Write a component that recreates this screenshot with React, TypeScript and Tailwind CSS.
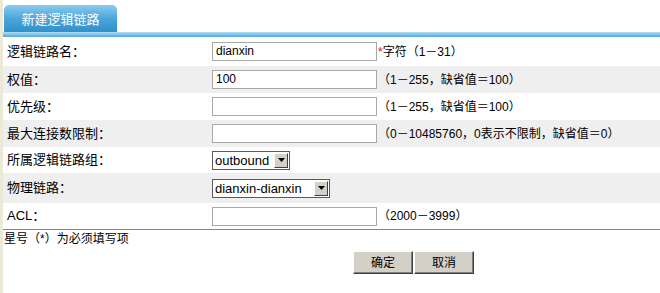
const font = { fontFamily: '"Liberation Sans", "Noto Sans CJK SC", sans-serif' };

type Row = {
  label: string;
  h: string;
  field: React.ReactNode;
  hint?: React.ReactNode;
};

const TextInput = ({ value = '' }: { value?: string }) => (
  <div className="h-[19px] w-[165px] border border-[#a8a8a8] bg-white pl-[3px] text-[12px] leading-[17px] text-black">
    {value}
  </div>
);

const FakeSelect = ({ value, w }: { value: string; w: string }) => (
  <div
    className={`flex items-center justify-between ${w} h-[19px] border border-[#5a5a5a] bg-white pl-[2px] pr-[1px] text-[13px] leading-[17px] text-black`}
  >
    <span>{value}</span>
    <span className="flex h-[15px] w-[14px] items-center justify-center border border-t-white border-l-white border-b-[#404040] border-r-[#404040] bg-[#d4d0c8]">
      <svg
        width="7"
        height="4"
        viewBox="0 0 7 4"
      >
        <path
          d="M0 0h7L3.5 4z"
          fill="#000"
        />
      </svg>
    </span>
  </div>
);

const rows: Row[] = [
  {
    label: '逻辑链路名：',
    h: 'h-[29px]',
    field: <TextInput value="dianxin" />,
    hint: (
      <>
        <span className="text-[#ff0000]">*</span>字符（1－31）
      </>
    ),
  },
  { label: '权值：', h: 'h-[27px]', field: <TextInput value="100" />, hint: '（1－255，缺省值＝100）' },
  { label: '优先级：', h: 'h-[27px]', field: <TextInput />, hint: '（1－255，缺省值＝100）' },
  {
    label: '最大连接数限制：',
    h: 'h-[27px]',
    field: <TextInput />,
    hint: '（0－10485760，0表示不限制，缺省值＝0）',
  },
  { label: '所属逻辑链路组：', h: 'h-[26px]', field: <FakeSelect value="outbound" w="w-[78px]" /> },
  { label: '物理链路：', h: 'h-[30px]', field: <FakeSelect value="dianxin-dianxin" w="w-[118px]" /> },
  { label: 'ACL：', h: 'h-[26px]', field: <TextInput />, hint: '（2000－3999）' },
];

const Button = ({ children }: { children: React.ReactNode }) => (
  <button className="h-[23px] w-[60px] border border-t-white border-l-white border-b-[#404040] border-r-[#404040] bg-[#d4d0c8] text-[12px] text-black shadow-[inset_-1px_-1px_0_#808080]">
    {children}
  </button>
);

export default function App() {
  return (
    <div
      className="flex h-[293px] w-[660px] bg-white text-[12px] text-black"
      style={font}
    >
      <div className="w-[3px] shrink-0 bg-[#ece9d8]" />

      <div className="flex-1">
        <div className="pt-[5px]">
          <div className="ml-[1px] flex h-[27px] w-[113px] items-center justify-center rounded-t-[5px] bg-gradient-to-b from-[#8acbee] via-[#4aa6da] to-[#2f90cb] pt-[3px] text-[13px] text-white">
            新建逻辑链路
          </div>
          <div className="h-[5px] bg-gradient-to-b from-[#b4def3] to-[#4fa7da]" />
        </div>

        {rows.map((row, i) => (
          <div
            key={row.label}
            className={`flex items-center ${row.h} ${i % 2 === 1 ? 'bg-[#efefef]' : 'bg-white'}`}
          >
            <div className="w-[209px] pl-[4px] text-[13px]">{row.label}</div>
            {row.field}
            {row.hint && <div className="pl-[1px] text-[12px]">{row.hint}</div>}
          </div>
        ))}

        <div className="h-px bg-[#3f9dd3]" />

        <div className="pl-[1px] pt-[2px] text-[12px] leading-[15px]">星号（*）为必须填写项</div>

        <div className="flex gap-px pl-[350px] pt-[4px]">
          <Button>确定</Button>
          <Button>取消</Button>
        </div>
      </div>
    </div>
  );
}
